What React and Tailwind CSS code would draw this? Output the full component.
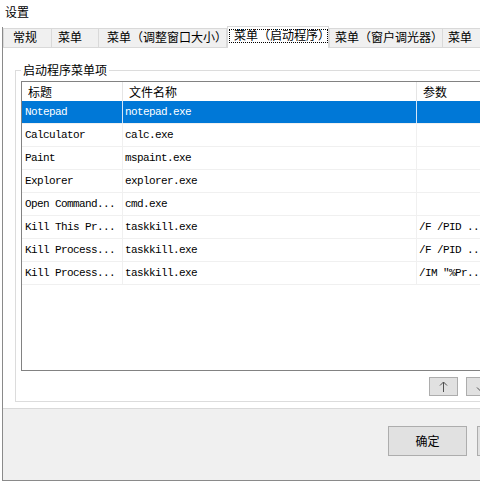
import React from "react";

const tabs = [
  { label: "常规", cls: "w-[49px] pl-[9px]" },
  { label: "菜单", cls: "w-[48px] pl-[6px] -ml-px" },
  { label: "菜单（调整窗口大小）", cls: "w-[129px] pl-[8px] -ml-px" },
  { label: "菜单（启动程序）", cls: "w-[102px] pl-[6px]", active: true },
  { label: "菜单（窗户调光器）", cls: "w-[114px] pl-[5px]" },
  { label: "菜单", cls: "w-[60px] pl-[5px] -ml-px" },
];

const rows = [
  ["Notepad", "notepad.exe", ""],
  ["Calculator", "calc.exe", ""],
  ["Paint", "mspaint.exe", ""],
  ["Explorer", "explorer.exe", ""],
  ["Open Command...", "cmd.exe", ""],
  ["Kill This Pr...", "taskkill.exe", "/F /PID ..."],
  ["Kill Process...", "taskkill.exe", "/F /PID ..."],
  ["Kill Process...", "taskkill.exe", '/IM "%Pr...'],
];

function Tab({ label, cls, active }) {
  if (active) {
    return (
      <div
        className={`relative z-10 h-[22px] -mb-px bg-white border border-b-0 border-[#d9d9d9] leading-[16px] whitespace-nowrap ${cls}`}
      >
        {label}
        <span className="absolute left-[1px] right-[0px] top-[2px] h-[14px] border border-dotted border-black" />
      </div>
    );
  }
  return (
    <div
      className={`h-[19px] bg-[#f0f0f0] border border-b-0 border-[#d9d9d9] leading-[16px] whitespace-nowrap ${cls}`}
    >
      {label}
    </div>
  );
}

// thin vertical arrow used on the reorder buttons
function ArrowButton({ down }) {
  return (
    <div className="w-[29px] h-[19px] bg-[#e1e1e1] border border-[#adadad] flex items-center justify-center">
      <svg
        width="9"
        height="11"
        viewBox="0 0 9 11"
        className={down ? "rotate-180" : ""}
        fill="none"
        stroke="#505050"
        strokeWidth="1"
      >
        <path d="M4.5 1 V11" />
        <path d="M1 4.5 L4.5 1 L8 4.5" />
      </svg>
    </div>
  );
}

export default function App() {
  return (
    <div className="w-[480px] h-[483px] overflow-hidden bg-white text-[12px] text-black font-['Noto_Sans_CJK_SC','Noto_Sans',sans-serif]">
      {/* title bar */}
      <div className="h-[27px] pl-[5px] pt-[3px] leading-[18px]">设置</div>

      {/* dialog frame */}
      <div className="ml-[2px] w-[600px] h-[454px] border-l border-b border-[#8a8a8a] flex flex-col">
        {/* tab strip */}
        <div className="h-[20px] shrink-0 flex items-end">
          {tabs.map((t, i) => (
            <Tab key={i} {...t} />
          ))}
        </div>

        {/* tab page */}
        <div className="h-[362px] shrink-0 bg-white border-t border-b border-[#d9d9d9] pt-[22px] pl-[12px]">
          <div className="relative w-[560px] h-[332px] border border-[#dcdcdc] pt-[10px] pl-[5px]">
            <span className="absolute left-[5px] -top-[9px] bg-white px-[2px] leading-[16px]">
              启动程序菜单项
            </span>

            {/* list view */}
            <div className="w-[540px] h-[290px] border border-[#828282] flex flex-col">
              <div className="h-[19px] shrink-0 flex leading-[20px]">
                <div className="w-[101px] pl-[6px] border-r border-[#e5e5e5]">标题</div>
                <div className="w-[294px] pl-[6px] border-r border-[#e5e5e5]">文件名称</div>
                <div className="flex-1 pl-[6px]">参数</div>
              </div>
              {rows.map((r, i) => {
                const sel = i === 0;
                return (
                  <div
                    key={i}
                    className={`h-[23px] shrink-0 flex border-b border-[#f0f0f0] leading-[23px] whitespace-nowrap font-['Liberation_Mono',monospace] text-[11px] tracking-[-0.6px] ${
                      sel ? "bg-[#0078d7] text-white" : ""
                    }`}
                  >
                    <div
                      className={`w-[101px] pl-[3px] border-r overflow-hidden ${
                        sel ? "border-[#d6e6f6]" : "border-[#f0f0f0]"
                      }`}
                    >
                      {r[0]}
                    </div>
                    <div
                      className={`w-[294px] pl-[2px] border-r overflow-hidden ${
                        sel ? "border-[#d6e6f6]" : "border-[#f0f0f0]"
                      }`}
                    >
                      {r[1]}
                    </div>
                    <div className="flex-1 pl-[2px] overflow-hidden">{r[2]}</div>
                  </div>
                );
              })}
            </div>

            {/* move up / down */}
            <div className="mt-[6px] pl-[408px] flex gap-[8px]">
              <ArrowButton />
              <ArrowButton down />
            </div>
          </div>
        </div>

        {/* dialog buttons */}
        <div className="flex-1 bg-[#f0f0f0] pt-[17px] pl-[385px] flex items-start gap-[10px]">
          <div className="w-[79px] h-[30px] bg-[#e1e1e1] border border-[#adadad] flex items-center justify-center">
            确定
          </div>
          <div className="w-[79px] h-[30px] bg-[#e1e1e1] border border-[#adadad] flex items-center justify-center">
            取消
          </div>
        </div>
      </div>
    </div>
  );
}
